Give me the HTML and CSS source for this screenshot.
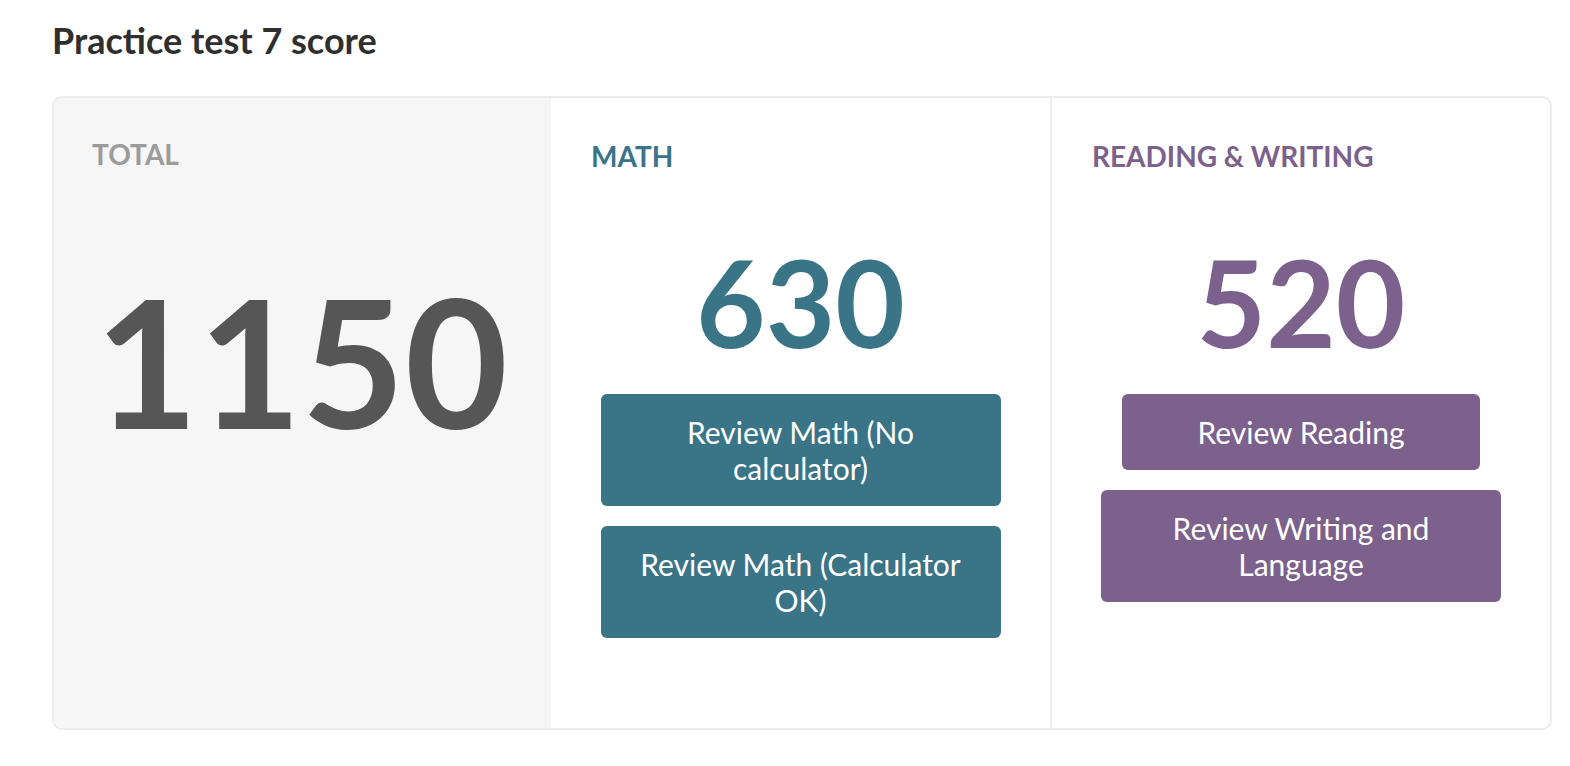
FILE: index.html
```html
<!DOCTYPE html>
<html lang="en">
<head>
    <meta charset="UTF-8">
    <meta name="viewport" content="width=device-width, initial-scale=1.0">
    <title>Practice test 7 score</title>
    <link rel="stylesheet" href="styles.css">
</head>
<body>
    <div class="score-page">
        <h1>Practice test 7 score</h1>

        <!-- Score summary card -->
        <div class="score-card">
            <div class="score-col total">
                <h2 class="score-label">TOTAL</h2>
                <p class="score-value">1150</p>
            </div>

            <div class="score-col math">
                <h2 class="score-label">MATH</h2>
                <p class="score-value">630</p>
                <button class="review-btn">Review Math (No calculator)</button>
                <button class="review-btn">Review Math (Calculator OK)</button>
            </div>

            <div class="score-col reading">
                <h2 class="score-label">READING &amp; WRITING</h2>
                <p class="score-value">520</p>
                <button class="review-btn short">Review Reading</button>
                <button class="review-btn">Review Writing and Language</button>
            </div>
        </div>
    </div>
</body>
</html>
```

FILE: styles.css
```css
body {
    font-family: 'Lato', 'Noto Sans', sans-serif;
    margin: 0;
    padding: 0;
    background-color: #fff;
}

.score-page {
    padding: 18px 0 0 52px;
}

h1 {
    font-size: 36px;
    font-weight: 700;
    color: #2f2f2f;
    margin: 0 0 34px 0;
    line-height: 44px;
}

.score-card {
    width: 1500px;
    height: 634px;
    box-sizing: border-box;
    display: grid;
    grid-template-columns: 497px 501px 1fr;
    border: 2px solid #ececec;
    border-radius: 10px;
    overflow: hidden;
}

.score-col {
    display: flex;
    flex-direction: column;
    align-items: center;
    padding: 40px 40px;
}

.score-col.total {
    background-color: #f6f6f6;
    margin: -2px 0 -2px -2px;
    padding-top: 40px;
}

.score-col.math {
    border-right: 2px solid #ececec;
}

.score-label {
    align-self: flex-start;
    margin: 0;
    font-size: 28px;
    font-weight: 700;
    line-height: 36px;
}

.total .score-label {
    color: #9b9b9b;
}

.math .score-label,
.math .score-value {
    color: #3a7587;
}

.reading .score-label,
.reading .score-value {
    color: #7b618b;
}

.score-value {
    margin: 55px 0 19px;
    font-size: 120px;
    font-weight: 700;
    line-height: 146px;
}

.total .score-value {
    color: #565656;
    font-size: 178px;
    line-height: 220px;
    margin-top: 78px;
}

.review-btn {
    width: 400px;
    padding: 20px 34px;
    margin-bottom: 20px;
    border: none;
    border-radius: 6px;
    font-family: inherit;
    font-size: 30px;
    line-height: 36px;
    color: #fff;
    cursor: pointer;
}

.review-btn.short {
    width: 358px;
}

.math .review-btn {
    background-color: #3a7587;
}

.reading .review-btn {
    background-color: #7b618b;
}
```
